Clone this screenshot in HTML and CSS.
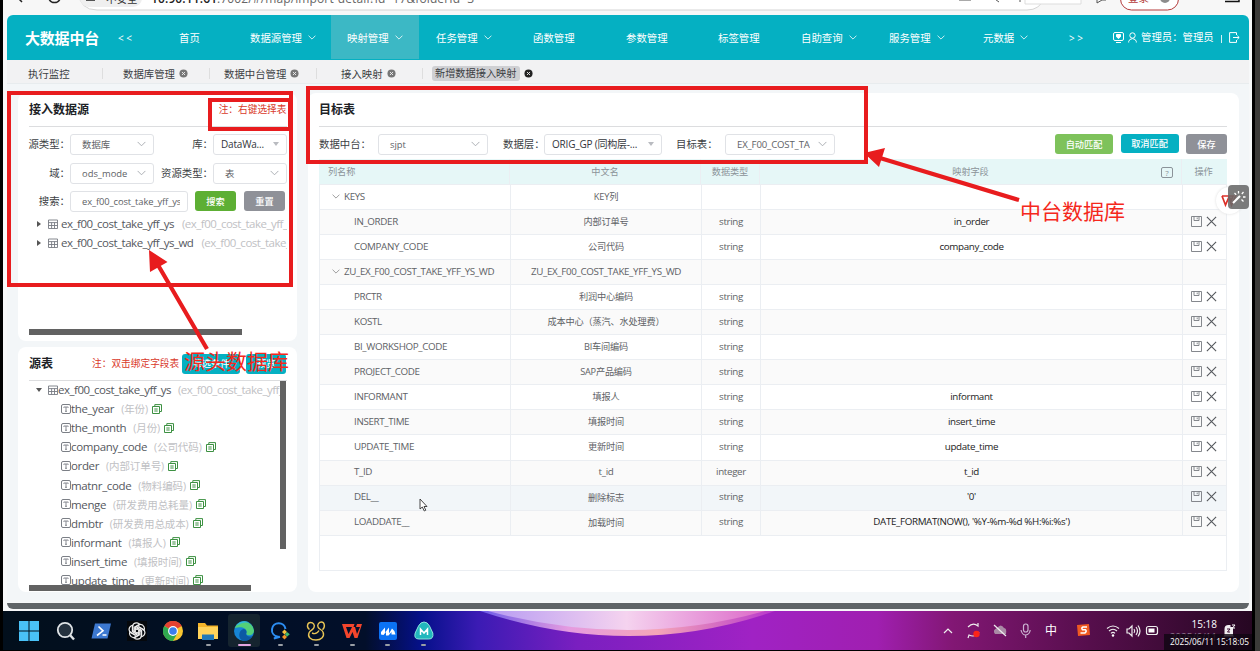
FILE: index.html
```html
<!DOCTYPE html>
<html lang="zh-CN">
<head>
<meta charset="utf-8">
<title>大数据中台</title>
<link rel="stylesheet" href="styles.css">
</head>
<body>
<svg class="defs" aria-hidden="true">
  <symbol id="chev" viewBox="0 0 10 6"><path d="M.7.7 5 5 9.300.7" fill="none" stroke="currentColor" stroke-width="1"/></symbol>
  <symbol id="close" viewBox="0 0 10 10"><circle cx="5" cy="5" r="4.500" fill="currentColor"/><path d="M3.300 3.300 6.700 6.700M6.700 3.300 3.300 6.700" stroke="#f2f2f2" stroke-width="1"/></symbol>
  <symbol id="grid" viewBox="0 0 10 10"><path d="M.5 1h9v8.500h-9zM.5 3.600h9M.5 6.500h9M3.600 3.600v5.900M6.500 3.600v5.900" fill="none" stroke="#777b82" stroke-width=".9"/></symbol>
  <symbol id="field" viewBox="0 0 10 10"><rect x=".5" y=".5" width="9" height="9" rx="1.500" fill="none" stroke="#6c7078" stroke-width=".9"/><path d="M2.800 3.700V3h4.400v.7M5 3v4.300M4 7.300h2" fill="none" stroke="#6c7078" stroke-width=".8"/></symbol>
  <symbol id="copy" viewBox="0 0 10 10"><path d="M2.800 2.500V.6h6.700v6.900H7.500M.5 2.500h7v7h-7zM2.300 5h3.400M2.300 7h3.400" fill="none" stroke="#3d9142" stroke-width="1"/></symbol>
  <symbol id="save" viewBox="0 0 11 11"><path d="M.5.5h10v10H.5zM3 .5v4h5v-4M6.200 1.500v1.700" fill="none" stroke="#777a80" stroke-width=".9"/></symbol>
  <symbol id="cross" viewBox="0 0 10 10"><path d="M.8.800 9.200 9.200M9.200.8.8 9.200" stroke="#55585d" stroke-width="1"/></symbol>
</svg>
<div class="screen">
  <div class="browser">
    <svg width="1249" height="15" viewBox="3 0 1249 15">
      <path d="M78-8q2 18 19 18h930q13 0 17-12z" fill="#fff" stroke="#d4d4d4"/>
      <rect x="80" y="-12" width="62" height="19" rx="9" fill="#efefef"/>
      <path d="M22 2l-3-3M49-1a6 6 0 0 0 11 0M86 0h9" fill="none" stroke="#222" stroke-width="1.500"/>
      <text x="106" y="2.500" font-size="10.500" fill="#333">不安全</text>
      <text x="151" y="2.500" font-size="12" fill="#222" textLength="323"><tspan font-weight="600">10.90.11.61</tspan><tspan fill="#666">:7002/#/map/import-detail?id=17&amp;folderId=3</tspan></text>
      <path d="M959 0h12M992-3l7 5M1020 2v-4M1097-2v5l5-3h4" fill="none" stroke="#555"/>
      <path d="M1025-2v6h56v-6z" fill="#fff" stroke="#ddd"/>
      <rect x="1120.500" y="-14" width="58" height="24" rx="11" fill="#fff" stroke="#b43a3a"/>
      <text x="1128" y="2" font-size="10.500" fill="#b43a3a">登录</text>
      <circle cx="1165" cy="-2" r="5" fill="#8c8c8c"/>
      <path d="M1225 1.500h14v-3" fill="none" stroke="#111" stroke-width="1.500"/>
    </svg>
  </div>

  <div class="app">
    <nav class="nav">
      <b class="brand">大数据中台</b>
      <span class="more">&lt;&nbsp;&lt;</span>
      <span>首页</span>
      <span>数据源管理<svg class="chev"><use href="#chev"/></svg></span>
      <span class="on">映射管理<svg class="chev"><use href="#chev"/></svg></span>
      <span>任务管理<svg class="chev"><use href="#chev"/></svg></span>
      <span>函数管理</span>
      <span>参数管理</span>
      <span>标签管理</span>
      <span>自助查询<svg class="chev"><use href="#chev"/></svg></span>
      <span>服务管理<svg class="chev"><use href="#chev"/></svg></span>
      <span>元数据<svg class="chev"><use href="#chev"/></svg></span>
      <span class="more">&gt;&nbsp;&gt;</span>
      <span class="user">
        <svg width="11" height="11" viewBox="0 0 11 11" fill="none" stroke="#fff"><rect x=".5" y=".5" width="10" height="8" rx="1.500"/><path d="M3 10.500h5"/><path d="M3.500 2.500h4v2.300l-2 1.700-2-1.700z" fill="#fff"/></svg>
        <svg width="9" height="11" viewBox="0 0 9 11" fill="none" stroke="#fff"><circle cx="4.500" cy="3.500" r="2.700"/><path d="M.7 10.500V9.400Q1.200 7 4.500 6.600 7.800 7 8.300 9.400v1.100"/></svg>
        <span class="who">管理员：管理员</span><i></i>
        <svg width="11" height="11" viewBox="0 0 11 11" fill="none" stroke="#fff"><path d="M7.500 3V.6H.6v9.800h6.900V8M4 5.500h6M8.300 3.700l1.900 1.800-1.900 1.800"/></svg>
      </span>
    </nav>
    <div class="tabs">
      <span>执行监控</span>
      <span class="t">数据库管理<svg><use href="#close"/></svg></span>
      <span class="t">数据中台管理<svg><use href="#close"/></svg></span>
      <span class="t">接入映射<svg><use href="#close"/></svg></span>
      <span class="t cur"><b>新增数据接入映射</b><svg><use href="#close"/></svg></span>
    </div>

    <main class="content">
      <aside class="side">
        <section class="card source">
          <header><h2>接入数据源</h2><em>注：右键选择表</em></header>
          <div class="form">
            <label>源类型：</label><div class="sel">数据库<svg class="chev"><use href="#chev"/></svg></div>
            <label>库：</label><div class="sel tri">DataWa...</div>
            <label>域：</label><div class="sel">ods_mode<svg class="chev"><use href="#chev"/></svg></div>
            <label>资源类型：</label><div class="sel">表<svg class="chev"><use href="#chev"/></svg></div>
          </div>
          <div class="search"><label>搜索：</label><div class="sel"><span class="clip">ex_f00_cost_take_yff_ys</span></div><button class="green">搜索</button><button class="grey">重置</button></div>
          <ul class="tree">
            <li><i class="right"></i><svg><use href="#grid"/></svg><span>ex_f00_cost_take_yff_ys</span><small>(ex_f00_cost_take_yff_ys)</small></li>
            <li><i class="right"></i><svg><use href="#grid"/></svg><span>ex_f00_cost_take_yff_ys_wd</span><small>(ex_f00_cost_take_yff_ys_wd)</small></li>
          </ul>
          <div class="hbar"></div>
        </section>
        <section class="card fields">
          <header><h2>源表</h2><em>注：双击绑定字段表</em><button class="teal b1">筛选条件</button><button class="teal b2">预览</button></header>
          <div class="pane">
            <ul class="tree cols">
              <li class="root"><i class="down"></i><svg><use href="#grid"/></svg><span>ex_f00_cost_take_yff_ys</span><small>(ex_f00_cost_take_yff_ys)</small></li>
              <li><svg><use href="#field"/></svg><span>the_year</span><small>(年份)</small><svg><use href="#copy"/></svg></li>
              <li><svg><use href="#field"/></svg><span>the_month</span><small>(月份)</small><svg><use href="#copy"/></svg></li>
              <li><svg><use href="#field"/></svg><span>company_code</span><small>(公司代码)</small><svg><use href="#copy"/></svg></li>
              <li><svg><use href="#field"/></svg><span>order</span><small>(内部订单号)</small><svg><use href="#copy"/></svg></li>
              <li><svg><use href="#field"/></svg><span>matnr_code</span><small>(物料编码)</small><svg><use href="#copy"/></svg></li>
              <li><svg><use href="#field"/></svg><span>menge</span><small>(研发费用总耗量)</small><svg><use href="#copy"/></svg></li>
              <li><svg><use href="#field"/></svg><span>dmbtr</span><small>(研发费用总成本)</small><svg><use href="#copy"/></svg></li>
              <li><svg><use href="#field"/></svg><span>informant</span><small>(填报人)</small><svg><use href="#copy"/></svg></li>
              <li><svg><use href="#field"/></svg><span>insert_time</span><small>(填报时间)</small><svg><use href="#copy"/></svg></li>
              <li><svg><use href="#field"/></svg><span>update_time</span><small>(更新时间)</small><svg><use href="#copy"/></svg></li>
            </ul>
            <div class="vbar"></div>
          </div>
          <div class="hbar wide"></div>
        </section>
      </aside>

      <section class="card target">
        <header><h2>目标表</h2></header>
        <div class="filters">
          <label>数据中台：</label><div class="sel">sjpt<svg class="chev"><use href="#chev"/></svg></div>
          <label>数据层：</label><div class="sel tri">ORIG_GP (同构层-...</div>
          <label>目标表：</label><div class="sel"><span class="clip">EX_F00_COST_TA</span><svg class="chev"><use href="#chev"/></svg></div>
          <div class="acts"><button class="lime">自动匹配</button><button class="teal">取消匹配</button><button class="grey">保存</button></div>
        </div>
        <div class="table">
          <div class="row head"><span>列名称</span><span>中文名</span><span>数据类型</span><span class="map">映射字段<i>?</i></span><span>操作</span></div>
          <div class="row grp"><span><svg class="chev"><use href="#chev"/></svg>KEYS</span><span>KEY列</span><span></span><span></span><span></span></div>
          <div class="row"><span>IN_ORDER</span><span>内部订单号</span><span>string</span><span>in_order</span><span><svg><use href="#save"/></svg><svg><use href="#cross"/></svg></span></div>
          <div class="row"><span>COMPANY_CODE</span><span>公司代码</span><span>string</span><span>company_code</span><span><svg><use href="#save"/></svg><svg><use href="#cross"/></svg></span></div>
          <div class="row grp"><span><svg class="chev"><use href="#chev"/></svg>ZU_EX_F00_COST_TAKE_YFF_YS_WD</span><span class="latin">ZU_EX_F00_COST_TAKE_YFF_YS_WD</span><span></span><span></span><span></span></div>
          <div class="row"><span>PRCTR</span><span>利润中心编码</span><span>string</span><span></span><span><svg><use href="#save"/></svg><svg><use href="#cross"/></svg></span></div>
          <div class="row"><span>KOSTL</span><span>成本中心（蒸汽、水处理费）</span><span>string</span><span></span><span><svg><use href="#save"/></svg><svg><use href="#cross"/></svg></span></div>
          <div class="row"><span>BI_WORKSHOP_CODE</span><span>BI车间编码</span><span>string</span><span></span><span><svg><use href="#save"/></svg><svg><use href="#cross"/></svg></span></div>
          <div class="row"><span>PROJECT_CODE</span><span>SAP产品编码</span><span>string</span><span></span><span><svg><use href="#save"/></svg><svg><use href="#cross"/></svg></span></div>
          <div class="row"><span>INFORMANT</span><span>填报人</span><span>string</span><span>informant</span><span><svg><use href="#save"/></svg><svg><use href="#cross"/></svg></span></div>
          <div class="row"><span>INSERT_TIME</span><span>填报时间</span><span>string</span><span>insert_time</span><span><svg><use href="#save"/></svg><svg><use href="#cross"/></svg></span></div>
          <div class="row"><span>UPDATE_TIME</span><span>更新时间</span><span>string</span><span>update_time</span><span><svg><use href="#save"/></svg><svg><use href="#cross"/></svg></span></div>
          <div class="row"><span>T_ID</span><span class="latin">t_id</span><span>integer</span><span>t_id</span><span><svg><use href="#save"/></svg><svg><use href="#cross"/></svg></span></div>
          <div class="row hover"><span>DEL__</span><span>删除标志</span><span>string</span><span>'0'</span><span><svg><use href="#save"/></svg><svg><use href="#cross"/></svg></span></div>
          <div class="row"><span>LOADDATE__</span><span>加载时间</span><span>string</span><span>DATE_FORMAT(NOW(), '%Y-%m-%d %H:%i:%s')</span><span><svg><use href="#save"/></svg><svg><use href="#cross"/></svg></span></div>
        </div>
      </section>
    </main>
    <div class="pagebar"></div>
  </div>

  <footer class="taskbar">
    <svg class="bloom" width="1249" height="39" viewBox="3 0 1249 39" preserveAspectRatio="none">
      <defs>
        <linearGradient id="sky"><stop offset="0" stop-color="#020f1c"/><stop offset=".29" stop-color="#020f2a"/><stop offset=".335" stop-color="#05108a"/><stop offset=".38" stop-color="#3b1bb4"/><stop offset=".46" stop-color="#7a1fc0"/><stop offset=".6" stop-color="#a022c4"/><stop offset=".7" stop-color="#a01fb0"/><stop offset=".76" stop-color="#821774"/><stop offset=".87" stop-color="#560e4c"/><stop offset="1" stop-color="#260722"/></linearGradient>
        <linearGradient id="arc"><stop offset="0" stop-color="#6c5ce8"/><stop offset=".3" stop-color="#e59be0"/><stop offset=".6" stop-color="#f4a5b8"/><stop offset="1" stop-color="#b838cc"/></linearGradient>
        <linearGradient id="arc2"><stop offset="0" stop-color="#b79cf2"/><stop offset=".5" stop-color="#f5d3ef"/><stop offset="1" stop-color="#dc69c8"/></linearGradient>
      </defs>
      <rect x="3" width="1249" height="39" fill="url(#sky)"/>
      <path d="M480 0Q630 50 775 0z" fill="url(#arc)"/>
      <path d="M488 0Q630 38 765 0z" fill="url(#arc2)"/>
    </svg>
    <div class="dock">
      <span><svg viewBox="0 0 20 20"><path d="M0 0h9.500v9.500H0zM10.500 0H20v9.500h-9.500zM0 10.500h9.500V20H0zM10.500 10.500H20V20h-9.500z" fill="#49c1f7"/></svg></span>
      <span><svg viewBox="0 0 20 20"><circle cx="10" cy="9" r="7.200" fill="#25323f" stroke="#dfe3e6" stroke-width="1.800"/><path d="M15.200 14.200 19 18.500" stroke="#dfe3e6" stroke-width="2.400"/></svg></span>
      <span><svg viewBox="0 0 20 20"><path d="M4 2.500h16L16.500 17.500H.5z" fill="#3c78d0"/><path d="M7.500 5.500l4.500 4.300-6 4.700M11.500 14h4" fill="none" stroke="#fff" stroke-width="1.600"/></svg></span>
      <span><svg viewBox="0 0 20 20"><rect width="20" height="20" fill="#05080c"/><g fill="none" stroke="#eee" stroke-width="1.200"><path id="petal" d="M7.200 11.500V6.300l4.300-2.500q3.800-1.400 5.600 2.200.7 1.800 0 3.200L12.500 6.600 8.300 9"/><use href="#petal" transform="rotate(60 10 10)"/><use href="#petal" transform="rotate(120 10 10)"/><use href="#petal" transform="rotate(180 10 10)"/><use href="#petal" transform="rotate(240 10 10)"/><use href="#petal" transform="rotate(300 10 10)"/></g></svg></span>
      <span><svg viewBox="0 0 20 20"><circle cx="10" cy="10" r="10" fill="#f9c631"/><path d="M10 10 1.300 5A10 10 0 0 1 18.700 5z" fill="#e44133"/><path d="M1.300 5A10 10 0 0 0 10 20l4.300-7.500L10 10z" fill="#2fa84f"/><circle cx="10" cy="10" r="4.900" fill="#fff"/><circle cx="10" cy="10" r="3.800" fill="#3b7ded"/></svg></span>
      <span class="run"><svg viewBox="0 0 20 20"><path d="M0 2h7l2 2.500h11V18H0z" fill="#f5b52a"/><path d="M0 6h20v12H0z" fill="#ffd35a"/><path d="M4 13.500h12V19H4z" fill="#2078b8"/></svg></span>
      <span class="run active"><svg viewBox="0 0 20 20"><circle cx="10" cy="10" r="10" fill="#1684d4"/><path d="M.8 7A10 10 0 0 1 20 9.500c0 3-2 4.800-5 4.800-2.300 0-3.200-1-2.700-2C13.500 8 9 5 .8 7z" fill="#53cf78"/><path d="M2 4.500Q8-2 15 1.500C8 1 5 4 2 4.500z" fill="#31b9d9"/><path d="M10 20C3 18.500 4.500 9 9.500 8c3.200.3 3.500 3 2.700 4.500-.5 2.500 3 4 6.300 2.500C17 18 14 20 10 20z" fill="#0c59a4"/></svg></span>
      <span class="run"><svg viewBox="0 0 20 20"><path d="M15.500 8A6.800 6.800 0 1 0 7 15.500l-3 2 6-1.700" fill="none" stroke="#2c8df2" stroke-width="2"/><path d="M14.500 8.500 17 11l-2.500 2.500L12 11z" fill="#f4c13d"/><path d="M17 11l2.800 2.300L17 15.800l-2-2.400z" fill="#42b96d"/><path d="M14.500 13.500 17 16l-2.500 2.500L12 16z" fill="#f29427"/></svg></span>
      <span class="run"><svg viewBox="0 0 20 20" fill="none" stroke="#e8c455" stroke-width="1.400"><path d="M3.500 8.500C0 6 1.500 1.500 4.500 1.500S9 4 8 6.500 4.500 9 3.200 11.500C1 16 5 19 10 19s9-3.500 7-8c-1-2.500-4-2.500-5-5S13 1 15.500 1 20 5.500 16.500 8.800M6 12q4.500 2 7-2.500"/></svg></span>
      <span class="run"><svg viewBox="0 0 20 20"><path d="M0 3h12.500l-1 3H4l2.500 7L10 6h3l2 7 3-7h-4l1-3h5l-4.500 14h-3L10.500 11l-3 6h-3z" fill="#f4452c"/></svg></span>
      <span class="run"><svg viewBox="0 0 20 20"><rect x="1" y="1" width="18" height="18" rx="2" fill="#0b72f5"/><path d="M3 13.500V11l4-4.500v5l4-5v6l3-5q3 2 3.500 6h-4V11l-3 3.500H8V11l-2.500 3z" fill="#fff"/></svg></span>
      <span class="run"><svg viewBox="0 0 20 20"><path d="M10 1q3.500 0 5.500 4l3.300 7q1 6-4 6H5q-5.500 0-3.800-6l3.300-7Q6.500 1 10 1z" fill="#22b8bd" stroke="#8be4dc"/><path d="M6.500 14V8l3.500 4 3.500-4v6" fill="none" stroke="#fff" stroke-width="1.500"/></svg></span>
    </div>
    <div class="tray">
      <svg width="245" height="39" viewBox="940 0 245 39" fill="none" stroke="#eee" stroke-width="1.200">
        <path d="M944 22l4-4 4 4M968 16q5-5 10-1v-3M979 21q-4 6-10 3l-1 3"/><circle cx="976.500" cy="23" r="3.200" fill="#fa2418" stroke="none"/>
        <path d="M995 23q-3-4 2-6 4-5 7 0 3 0 2 6z" fill="#a98aa5" stroke="none"/><path d="M994 14l12 11" /><rect x="1023.500" y="13" width="4.500" height="8" rx="2.200" stroke="#cbb3d1"/><path d="M1021 19q1 5 4.700 5 4-.5 4.500-5M1025.700 24v3" stroke="#cbb3d1"/>
        <path d="M1077 14l12-1 1 11-12 1z" fill="#ef5a22" stroke="none"/><path d="M1087 16h-4q-2 1-.5 2.800h3q1.500 1.500-.5 3.200h-4.500" stroke="#fff" stroke-width="1.600"/>
        <path d="M1107 17.500q6-5 12 0M1109 20q4-3.500 8 0M1111 22.300q2-2 4 0"/><circle cx="1113" cy="24.500" r="1.200" fill="#fff" stroke="none"/>
        <path d="M1127 18h2l3-3v10l-3-3h-2zM1134 18q1.500 2 0 4M1136 16q3 4 0 8M1138 14.500q4 5.500 0 11"/><rect x="1146.500" y="15.500" width="11" height="8" rx="2"/><rect x="1148.500" y="17.500" width="6" height="4" fill="#fff" stroke="none"/>
        <text x="1045" y="23.500" font-size="12" fill="#fff" stroke="none">中</text>
      </svg>
      <div class="clock"><span>15:18</span><span class="date">2025/6/11</span></div>
      <svg width="13" height="13" viewBox="0 0 13 13"><path d="M1.500 11V5q0-4 4-4h2v2h2.500v8l1 1.500H.5z" fill="#f1edf1"/><path d="M4 5h3L4.500 8H7" fill="none" stroke="#3a0a30"/><path d="M9 1h3L9.500 4H12" fill="none" stroke="#fff"/></svg>
    </div>
  </footer>

  <div class="mark m1"></div><div class="mark m2"></div><div class="mark m3"></div>
  <svg class="arrows" width="1260" height="651" viewBox="0 0 1260 651">
    <g stroke="#e81c1e" stroke-width="4.200"><path d="M207 349 158 265M1019 200 880 158"/></g>
    <path d="M149 250l18.500 12-17.500 10zM864 153l21-5-6 19z" fill="#e81c1e"/>
    <path d="M420 499v10l2.300-2 2 4 1.500-.8-1.800-3.700h3z" fill="#fff" stroke="#333" stroke-width=".9"/>
  </svg>
  <div class="note n1">源头数据库</div>
  <div class="note n2">中台数据库</div>
  <div class="wps"><svg width="18" height="14" viewBox="0 0 18 14"><path d="M1 2h11L10 7 8 2M1 2l3.500 9L8 3l2.500 8L15 1" fill="none" stroke="#dc3028" stroke-width="1.700"/></svg></div>
  <div class="wand"><svg width="14" height="14" viewBox="0 0 14 14" stroke="#fff" stroke-width="1.300"><path d="M1 13 8 6" stroke-width="2.200"/><path d="M6.500 1v2.500M2.500 3l1.700 1.700M11.500 2 9.800 4M11 7h2.500M9.500 9.500l2 2"/></svg></div>
  <div class="stamp">2025/06/11 15:18:05</div>
</div>
</body>
</html>
```
FILE: styles.css
```css
* { box-sizing: border-box; }
body { margin: 0; width: 1260px; height: 651px; overflow: hidden; background: #3b3a38; font-family: "Open Sans", "Noto Sans CJK SC", sans-serif; font-size: 10.4px; color: #3c3f44; }
.defs { position: absolute; width: 0; height: 0; }
.screen { position: relative; width: 1255px; height: 651px; background: #f7f8f9; border: solid #000; border-width: 0 3px 1px; display: flex; flex-direction: column; overflow: hidden; }
.browser { height: 15px; flex: none; background: #f7f7f7; overflow: hidden; }
.browser svg { display: block; }
svg.chev { width: 8px; height: 5px; flex: none; }
.app { height: 596px; flex: none; padding: 0 3px 0 4px; }
.nav { height: 45px; border-radius: 6px 6px 0 0; background: #05b0c2; color: #fff; padding-left: 18px; display: grid; align-items: center; white-space: nowrap;
  grid-template-columns: 93px 61px 71px 81px 105px 97px 93px 92px 83px 88px 94px 86px 45px 1fr; }
.nav > span { display: flex; align-items: center; gap: 6px; }
.nav .on { background: #3cb8c5; width: 88px; height: 44px; padding-left: 16px; align-self: start; }
.brand { font-size: 15px; line-height: 20px; letter-spacing: -.2px; }
.nav .more { letter-spacing: 0; font-size: 10px; padding-top: 1px; }
.nav .user { gap: 4px; margin-left: -1px; }
.user .who { margin-top: -3px; }
.user i { width: 1px; height: 8px; background: #d5f1f4; margin: 3px 3px 0; }
.tabs { height: 24px; background: #f2f2f3; display: grid; grid-template-columns: 74px 107px 107px 106px 140px; padding-left: 21px; align-items: center; white-space: nowrap; border-bottom: 1px solid #e8ecee; }
.tabs > span { display: flex; align-items: center; height: 11px; margin-top: 3px; }
.tabs .t { border-left: 1px solid #dedede; padding-left: 20px; gap: 4px; color: #3c3f44; }
.tabs .t:nth-child(3) { padding-left: 14px; }
.tabs .t:nth-child(4) { padding-left: 24px; }
.tabs .t.cur { padding-left: 9px; }
.tabs svg { width: 9px; height: 9px; color: #777; }
.tabs .cur svg { color: #222; }
.tabs b { font-weight: 400; background: #cfd0d3; border-radius: 3px; line-height: 15px; padding: 0 3px; font-size: 10.2px; }
.content { height: 518px; background: #f3f6f8; padding: 9px 10px 10px 11px; display: flex; gap: 11px; }
.side { width: 279px; display: flex; flex-direction: column; gap: 6px; }
.card { background: #fff; border-radius: 8px; padding: 0 10.5px 0 11px; overflow: hidden; }
.source { height: 248px; display: flex; flex-direction: column; }
.fields { height: 245px; }
.card header { height: 34px; border-bottom: 1px solid #dcdddf; display: flex; align-items: center; justify-content: space-between; white-space: nowrap; }
h2 { margin: 0; font-size: 12px; line-height: 16px; color: #202226; }
em { font-style: normal; color: #d93a2b; font-size: 9.7px; margin-top: -1px; }
.form { display: grid; grid-template-columns: 41px 84px 59px 74px; row-gap: 8px; padding-top: 7px; }
label { font-size: 10.4px; white-space: nowrap; display: flex; align-items: center; justify-content: flex-end; padding-bottom: 2px; }
.sel { height: 21px; border: 1px solid #e0e2e6; border-radius: 3px; background: #fff; font-size: 9.4px; color: #606266; padding: 0 7px 1px 11px; display: flex; align-items: center; justify-content: space-between; white-space: nowrap; overflow: hidden; }
.sel .chev { color: #a4a7ad; width: 9px; height: 6px; }
.sel.tri { padding: 0 7px 2px; color: #33363b; font-size: 10px; letter-spacing: -.2px; }
.tri::after { content: ""; border: solid transparent; border-width: 4px 3.500px 0; border-top-color: #b9bbc0; }
.clip { overflow: hidden; }
.search .clip { letter-spacing: -.1px; }
.filters .clip { font-size: 9.6px; letter-spacing: -.15px; }
.search { display: grid; grid-template-columns: 41px 118px 41px 41px; column-gap: 0; padding-top: 7px; }
.search button.green { margin-left: 7px; margin-right: -7px; }
.search button.grey { margin-left: 15px; margin-right: -15px; }
button { border: 0; border-radius: 3px; color: #fff; font: inherit; font-size: 9.200px; font-weight: 500; padding: 0 0 1px; height: 20px; white-space: nowrap; }
.green { background: #5daf34; } .grey { background: #8f9198; } .teal { background: #05b0c2; } .lime { background: #7ec25b; }
.tree { list-style: none; margin: 2px 0 0; padding: 0; font-size: 11.5px; color: #55585e; overflow: hidden; }
.tree li { height: 19.100px; display: flex; align-items: center; padding-left: 7px; white-space: nowrap; }
.tree svg { width: 10px; height: 10px; flex: none; margin-right: 3px; }
.tree span { letter-spacing: -.5px; }
.tree small { font-size: 11.5px; letter-spacing: -.5px; color: #bfc1c4; margin-left: 8px; margin-right: 4px; }
.tree i { border: solid transparent; margin-right: 7px; }
.tree .right { border-width: 3px 0 3px 4px; border-left-color: #555; margin-left: 1px; }
.tree .down { border-width: 4px 3px 0; border-top-color: #555; margin-right: 6px; }
.hbar { width: 213px; height: 6px; background: #626262; margin-top: auto; margin-bottom: 6px; }
.fields header { justify-content: flex-start; }
.fields em { margin-left: 39px; width: 90px; }
.b1 { width: 58px; } .b2 { width: 40px; margin-left: 6px; }
.pane { display: flex; height: 204px; overflow: hidden; }
.pane .tree { width: 251px; margin: -1px 0 0; }
.tree.cols li { padding-left: 32px; }
.tree.cols li.root { padding-left: 7px; }
.tree.cols svg { margin-right: 0; }
.tree.cols small { font-size: 10.500px; letter-spacing: -.1px; margin-left: 7px; }
.tree.cols span { letter-spacing: -.35px; }
.tree.cols .root span { letter-spacing: -.5px; }
.tree.cols .root small { font-size: 11.5px; letter-spacing: -.5px; }
.vbar { width: 6px; height: 168px; background: #626262; flex: none; }
.hbar.wide { width: 222px; margin: 0; }
.target { width: 931px; padding-right: 12px; }
.filters { display: grid; grid-template-columns: 59px 110px 56px 118px 63px 110px 1fr; padding-top: 7px; height: 32px; }
.filters label { justify-content: flex-start; padding-bottom: 6px; }
.filters label:nth-of-type(2) { padding-left: 15px; }
.filters label:nth-of-type(3) { padding-left: 14px; }
.acts { display: flex; gap: 7.500px; justify-content: flex-end; }
.acts .lime, .acts .teal { width: 58px; } .acts .grey { width: 41px; }
.acts .teal { height: 19px; }
.table { border: 1px solid #ebeef2; border-top: 0; height: 412px; }
.row { height: 25.050px; display: grid; grid-template-columns: 191px 191px 59px 422px 1fr; background: #fff; }
.row:nth-child(odd) { background: #fafafa; }
.row.head { height: 26px; background: #e6f7f7; margin: 0 -1px; }
.row.hover { background: #f2f6f9; }
.row > span { border: solid #ebeef2; border-width: 0 1px 1px 0; display: flex; align-items: center; justify-content: center; font-size: 9.800px; letter-spacing: -.35px; color: #606266; white-space: nowrap; padding-bottom: 2px; }
.row > span:nth-child(2):not(.latin) { font-size: 9.200px; letter-spacing: -.2px; }
.row > span:last-child { border-right: 0; gap: 4px; padding-right: 2px; }
.row > span:first-child { justify-content: flex-start; padding-left: 34px; }
.row.grp > span:first-child { padding-left: 12px; gap: 4px; }
.row > span:nth-child(4) { color: #222; }
.row.head > span:nth-child(n) { color: #8b9399; font-size: 9.200px; letter-spacing: -.1px; }
.row.head > span:first-child { padding-left: 9px; }
.row span > svg:not(.chev) { width: 11px; height: 11px; }
.row .chev { color: #888; }
.row .map { position: relative; }
.map i { position: absolute; right: 8px; top: 8px; width: 12px; height: 11px; border: 1px solid #8b9399; border-radius: 2px; font-style: normal; font-size: 8px; line-height: 9px; text-align: center; }
.pagebar { height: 6px; margin-top: 1px; background: #5f6467; border-radius: 0 0 6px 6px; }
.taskbar { position: relative; height: 39px; flex: none; display: flex; justify-content: space-between; color: #fff; }
.bloom { position: absolute; left: 0; top: 0; }
.dock { position: relative; display: flex; padding-left: 8px; }
.dock span { width: 35.900px; height: 39px; display: flex; justify-content: center; align-items: center; position: relative; }
.dock svg { width: 20px; height: 20px; }
.run::after { content: ""; position: absolute; bottom: 4px; width: 5px; height: 2px; border-radius: 1px; background: #999ea4; }
.dock .active { background: #15242f; border-radius: 3px; height: 33px; margin-top: 3px; width: 32px; margin-left: 2px; margin-right: 2px; }
.active::after { bottom: 1px; width: 13px; background: #e2a5e2; }
.tray { position: relative; display: flex; align-items: center; padding-right: 16px; }
.clock { display: flex; flex-direction: column; align-items: flex-end; width: 62px; margin-left: -30px; margin-right: 6px; font-size: 10px; line-height: 13px; }
.clock .date { color: #8c758b; }
.mark { position: absolute; border: 4px solid #e81c1e; }
.m1 { left: 4px; top: 91px; width: 286px; height: 196px; }
.m2 { left: 205px; top: 98px; width: 84px; height: 33px; }
.m3 { left: 303px; top: 86px; width: 562px; height: 78px; }
.arrows { position: absolute; left: -3px; top: 0; }
.note { position: absolute; color: #f5281c; font-size: 21px; line-height: 26px; white-space: nowrap; }
.n1 { left: 181px; top: 348px; }
.n2 { left: 1017px; top: 198px; }
.wps { position: absolute; left: 1213px; top: 187px; width: 27px; height: 27px; border-radius: 50%; background: #fff; box-shadow: 0 0 3px #ddd; padding: 7px 0 0 5px; }
.wand { position: absolute; left: 1225px; top: 185px; width: 21px; height: 24px; border-radius: 4px; background: rgba(105, 105, 105, .88); display: flex; align-items: center; justify-content: center; }
.stamp { position: absolute; left: 1161px; top: 634px; width: 91px; height: 16px; background: rgba(15, 5, 18, .8); color: #fff; font-size: 8.300px; line-height: 15px; text-align: center; white-space: nowrap; }
```
